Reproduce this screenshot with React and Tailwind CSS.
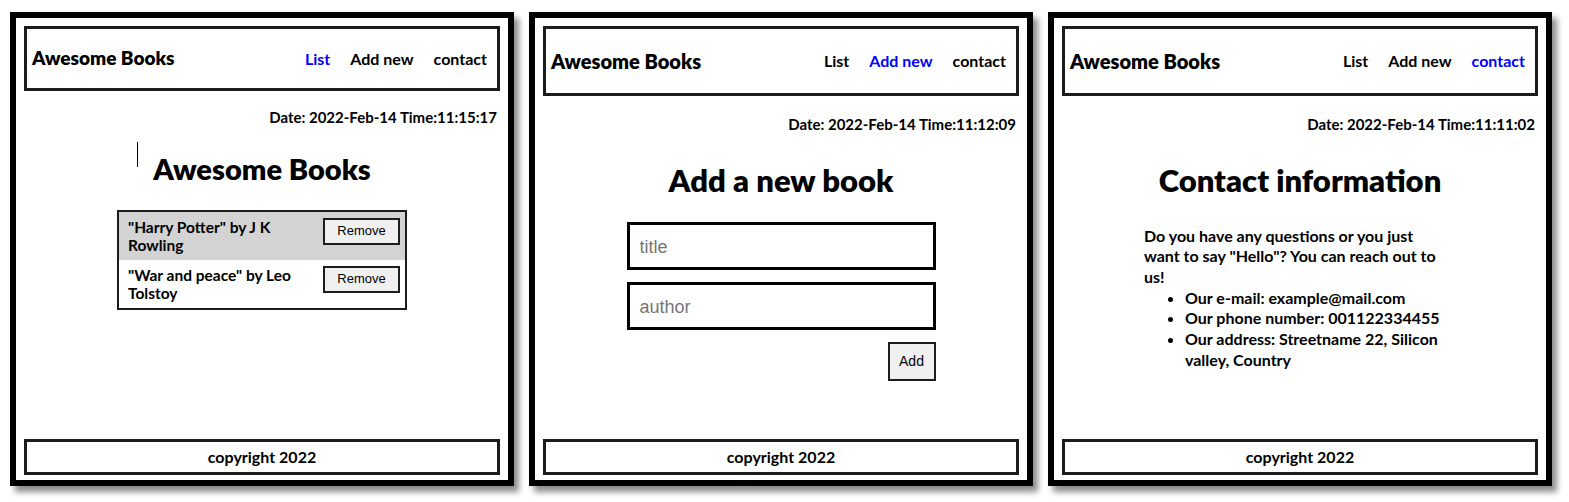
import React from 'react';

const font = { fontFamily: 'Lato, "Noto Sans", sans-serif' };

const Header = ({ active, tall }) => (
    <header className={`mx-2 mt-2 border-[3px] border-[#1c1c1c] flex items-center justify-between pl-[5px] pr-[10px] ${tall ? 'h-[70px]' : 'h-[65px]'}`}>
        <h2 className={`font-extrabold text-black ${tall ? 'text-[20px]' : 'text-[19px]'}`}>Awesome Books</h2>
        <nav className="flex items-center gap-[20px] text-[16px] font-bold">
            {['List', 'Add new', 'contact'].map((item) => (
                <a key={item} className={item === active ? 'text-[#0000ff]' : 'text-black'}>{item}</a>
            ))}
        </nav>
    </header>
);

const DateLine = ({ time, tall }) => (
    <p className={`text-right pr-[11px] text-[15px] font-bold text-black ${tall ? 'mt-[17px]' : 'mt-[15px]'}`}>
        Date: 2022-Feb-14 Time:{time}
    </p>
);

const Footer = () => (
    <footer className="mx-2 mt-auto mb-[5px] h-[36px] border-[3px] border-[#1c1c1c] flex items-center justify-center text-[16px] font-bold text-black">
        copyright 2022
    </footer>
);

const Panel = ({ children }) => (
    <section className="w-[504px] h-[474px] border-[6px] border-black bg-white flex flex-col shadow-[5px_6px_6px_rgba(0,0,0,0.45)]">
        {children}
    </section>
);

const books = [
    { title: '"Harry Potter" by J K Rowling' },
    { title: '"War and peace" by Leo Tolstoy' },
];

const ListPanel = () => (
    <Panel>
        <Header active="List" />
        <DateLine time="11:15:17" />
        <div className="relative mt-[22px] flex justify-center">
            <span className="absolute left-[121px] top-[-9px] w-px h-[25px] bg-black" />
            <h1 className="text-[29px] font-extrabold text-black leading-[36px]">Awesome Books</h1>
        </div>
        <ul className="mx-auto mt-[23px] w-[290px] border-2 border-[#1c1c1c]">
            {books.map((book, idx) => (
                <li key={book.title} className={`flex items-start pl-[9px] pr-[5px] py-[6px] ${idx === 0 ? 'bg-[#d3d3d3]' : 'bg-white'}`}>
                    <span className="w-[175px] text-[15.5px] font-bold leading-[18px] text-black">{book.title}</span>
                    <button className="ml-auto w-[77px] h-[27px] border-2 border-[#1c1c1c] bg-[#f0f0f0] text-[13px] text-black" style={{ fontFamily: 'Arial, "Liberation Sans", sans-serif' }}>
                        Remove
                    </button>
                </li>
            ))}
        </ul>
        <Footer />
    </Panel>
);

const AddPanel = () => (
    <Panel>
        <Header active="Add new" tall />
        <DateLine time="11:12:09" tall />
        <h1 className="mt-[25px] text-center text-[31px] font-extrabold text-black leading-[38px]">Add a new book</h1>
        <form className="mx-auto mt-[23px] w-[309px] flex flex-col gap-[12px]" style={{ fontFamily: 'Arial, "Liberation Sans", sans-serif' }}>
            <input placeholder="title" className="h-[48px] border-[3px] border-black pl-[10px] pt-[4px] text-[18px] placeholder:text-[#757575] outline-none" />
            <input placeholder="author" className="h-[48px] border-[3px] border-black pl-[10px] pt-[4px] text-[18px] placeholder:text-[#757575] outline-none" />
            <button type="button" className="self-end w-[48px] h-[39px] border-2 border-[#1c1c1c] bg-[#f0f0f0] text-[14px] text-black">Add</button>
        </form>
        <Footer />
    </Panel>
);

const ContactPanel = () => (
    <Panel>
        <Header active="contact" tall />
        <DateLine time="11:11:02" tall />
        <h1 className="mt-[25px] text-center text-[31px] font-extrabold text-black leading-[38px]">Contact information</h1>
        <div className="ml-[90px] mt-[27px] w-[300px] text-[16px] font-bold leading-[20.7px] text-black">
            <p>Do you have any questions or you just want to say "Hello"? You can reach out to us!</p>
            <ul className="list-disc pl-[41px]">
                <li>Our e-mail: example@mail.com</li>
                <li>Our phone number: 001122334455</li>
                <li>Our address: Streetname 22, Silicon valley, Country</li>
            </ul>
        </div>
        <Footer />
    </Panel>
);

export default function App() {
    return (
        <div className="w-[1569px] h-[502px] bg-white flex items-start gap-[15px] pl-[10px] pt-[12px]" style={font}>
            <ListPanel />
            <AddPanel />
            <ContactPanel />
        </div>
    );
}
